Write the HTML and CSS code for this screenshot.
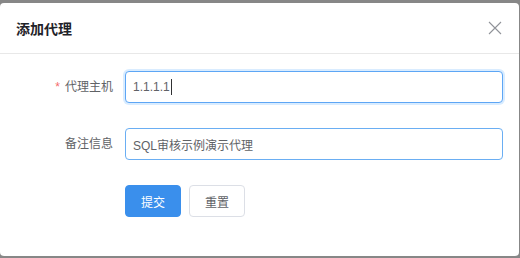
FILE: index.html
```html
<!DOCTYPE html>
<html lang="zh-CN">
<head>
    <meta charset="UTF-8">
    <title>添加代理</title>
    <link rel="stylesheet" href="styles.css">
</head>
<body>

<div class="dialog">
    <div class="dialog-header">
        <span class="dialog-title">添加代理</span>
        <button class="dialog-close" aria-label="关闭">
            <svg width="14" height="14" viewBox="0 0 14 14">
                <path d="M1 1 L13 13 M13 1 L1 13" stroke="#909399" stroke-width="1.1" fill="none"/>
            </svg>
        </button>
    </div>

    <div class="dialog-body">
        <div class="form-item">
            <label class="form-label is-required" for="host">代理主机</label>
            <div class="form-content">
                <input class="form-input is-focus" id="host" type="text" value="1.1.1.1">
                <span class="caret"></span>
            </div>
        </div>

        <div class="form-item">
            <label class="form-label" for="remark">备注信息</label>
            <div class="form-content">
                <input class="form-input is-hover" id="remark" type="text" value="SQL审核示例演示代理">
            </div>
        </div>

        <div class="form-item">
            <span class="form-label"></span>
            <div class="form-content buttons">
                <button class="btn btn-primary">提交</button>
                <button class="btn">重置</button>
            </div>
        </div>
    </div>
</div>

</body>
</html>
```

FILE: styles.css
```css
html, body {
    margin: 0;
    padding: 0;
}
body {
    width: 520px;
    height: 258px;
    background-color: #878787;
    font-family: "Liberation Sans", "Noto Sans CJK SC", sans-serif;
    overflow: hidden;
    padding-top: 3px;
    box-sizing: border-box;
}
.dialog {
    width: 519px;
    height: 253px;
    background-color: #fff;
    border-radius: 4px;
    box-sizing: border-box;
}
.dialog-header {
    height: 50px;
    display: flex;
    align-items: center;
    justify-content: space-between;
    padding: 0 17px 0 16px;
    border-bottom: 1px solid #e8e8e8;
}
.dialog-title {
    font-size: 14px;
    font-weight: bold;
    color: #1f2329;
}
.dialog-close {
    border: none;
    background: none;
    padding: 0;
    width: 14px;
    height: 14px;
    display: flex;
}
.dialog-body {
    padding: 17px 16px 0 0;
}
.form-item {
    display: flex;
    align-items: center;
    margin-bottom: 25px;
}
.form-label {
    width: 113px;
    padding-right: 12px;
    text-align: right;
    font-size: 12px;
    color: #606266;
    line-height: 32px;
}
.form-label.is-required::before {
    content: "*";
    color: #f56c6c;
    margin-right: 5px;
}
.form-content {
    flex: 1;
    position: relative;
}
.form-input {
    display: block;
    width: 100%;
    height: 32px;
    box-sizing: border-box;
    padding: 0 7px;
    border: 1px solid #dcdfe6;
    border-radius: 4px;
    font-family: inherit;
    font-size: 12px;
    color: #606266;
    outline: none;
}
.form-input.is-focus {
    border-color: #5da6f5;
    box-shadow: 0 0 0 2px rgba(64, 158, 255, 0.2);
}
.form-input.is-hover {
    border-color: #6aaef3;
}
.caret {
    position: absolute;
    left: 46px;
    top: 8px;
    width: 1px;
    height: 16px;
    background-color: #303133;
}
.buttons {
    display: flex;
    gap: 8px;
}
.btn {
    width: 56px;
    height: 32px;
    border: 1px solid #dcdfe6;
    border-radius: 4px;
    background-color: #fff;
    color: #606266;
    font-family: inherit;
    font-size: 12px;
    padding: 0;
}
.btn-primary {
    background-color: #3a8fec;
    border-color: #3a8fec;
    color: #fff;
}
```
